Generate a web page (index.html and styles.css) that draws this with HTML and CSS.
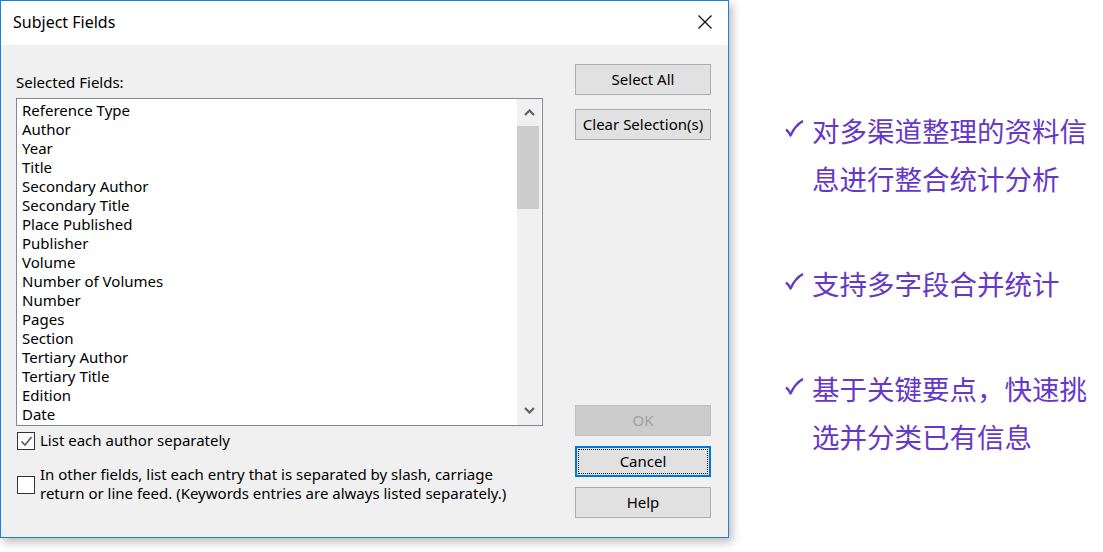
FILE: index.html
```html
<!DOCTYPE html>
<html lang="zh-CN">
<head>
<meta charset="utf-8">
<title>Subject Fields</title>
<link rel="stylesheet" href="styles.css">
</head>
<body>
<div class="page">
  <div class="dialog">
    <div class="titlebar">
      <span class="title">Subject Fields</span>
      <svg class="close" width="16" height="16" viewBox="0 0 16 16"><path d="M1.5 1.5L14.5 14.5M14.5 1.5L1.5 14.5" stroke="#111" stroke-width="1.3" fill="none"/></svg>
    </div>
    <div class="content">
      <div class="left">
        <div class="label">Selected Fields:</div>
        <div class="listbox">
          <div class="items">
            <div>Reference Type</div>
            <div>Author</div>
            <div>Year</div>
            <div>Title</div>
            <div>Secondary Author</div>
            <div>Secondary Title</div>
            <div>Place Published</div>
            <div>Publisher</div>
            <div>Volume</div>
            <div>Number of Volumes</div>
            <div>Number</div>
            <div>Pages</div>
            <div>Section</div>
            <div>Tertiary Author</div>
            <div>Tertiary Title</div>
            <div>Edition</div>
            <div>Date</div>
          </div>
          <div class="scrollbar">
            <div class="sb-btn sb-up"><svg width="11" height="7" viewBox="0 0 11 7"><path d="M1 6L5.5 1.5L10 6" stroke="#606060" stroke-width="2.2" fill="none"/></svg></div>
            <div class="sb-track"><div class="sb-thumb"></div></div>
            <div class="sb-btn sb-down"><svg width="11" height="7" viewBox="0 0 11 7"><path d="M1 1L5.5 5.5L10 1" stroke="#606060" stroke-width="2.2" fill="none"/></svg></div>
          </div>
        </div>
        <div class="check-row row1">
          <span class="box"><svg width="15" height="15" viewBox="0 0 15 15"><path d="M2.5 7.5L6 11L12.5 3" stroke="#5a5a5a" stroke-width="1.6" fill="none"/></svg></span>
          <span class="check-label">List each author separately</span>
        </div>
        <div class="check-row row2">
          <span class="box"></span>
          <span class="check-label">In other fields, list each entry that is separated by slash, carriage<br>return or line feed. (Keywords entries are always listed separately.)</span>
        </div>
      </div>
      <div class="right">
        <button class="btn">Select All</button>
        <button class="btn btn-clear">Clear Selection(s)</button>
        <button class="btn btn-ok" disabled>OK</button>
        <button class="btn btn-cancel"><span class="focus">Cancel</span></button>
        <button class="btn btn-help">Help</button>
      </div>
    </div>
  </div>
  <div class="notes">
    <div class="note"><svg class="tick" width="19" height="17" viewBox="0 0 19 17"><path d="M1 9.5C2.5 10.5 4 12.5 5.5 15.5C8.5 9 12.5 4 18 1" stroke="currentColor" stroke-width="2.4" fill="none" stroke-linejoin="round"/></svg><span class="note-text">对多渠道整理的资料信<br>息进行整合统计分析</span></div>
    <div class="note"><svg class="tick" width="19" height="17" viewBox="0 0 19 17"><path d="M1 9.5C2.5 10.5 4 12.5 5.5 15.5C8.5 9 12.5 4 18 1" stroke="currentColor" stroke-width="2.4" fill="none" stroke-linejoin="round"/></svg><span class="note-text">支持多字段合并统计</span></div>
    <div class="note"><svg class="tick" width="19" height="17" viewBox="0 0 19 17"><path d="M1 9.5C2.5 10.5 4 12.5 5.5 15.5C8.5 9 12.5 4 18 1" stroke="currentColor" stroke-width="2.4" fill="none" stroke-linejoin="round"/></svg><span class="note-text">基于关键要点，快速挑<br>选并分类已有信息</span></div>
  </div>
</div>
</body>
</html>
```

FILE: styles.css
```css
html, body {
  margin: 0;
  padding: 0;
  background: #ffffff;
}
.page {
  display: flex;
  align-items: flex-start;
  width: 1103px;
  height: 552px;
  overflow: hidden;
}
.dialog {
  width: 727px;
  height: 536px;
  border: 1px solid #1c80d6;
  background: #f0f0f0;
  box-shadow: 3px 4px 9px rgba(0, 0, 0, 0.28);
  display: flex;
  flex-direction: column;
  font-family: "Noto Sans", "Open Sans", sans-serif;
  font-size: 15px;
  color: #000;
  flex: none;
}
.titlebar {
  height: 44px;
  background: #ffffff;
  display: flex;
  align-items: center;
  justify-content: space-between;
  padding: 0 15px 0 12px;
  flex: none;
}
.title {
  font-size: 16px;
  position: relative;
  top: -1px;
}
.close {
  position: relative;
  top: -1px;
}
.content {
  flex: 1;
  display: flex;
  padding: 19px 16px 19px 15px;
}
.left {
  width: 527px;
  display: flex;
  flex-direction: column;
}
.label {
  margin-top: 9px;
  line-height: 18px;
  height: 18px;
}
.listbox {
  margin-top: 7px;
  height: 326px;
  border: 1px solid #828790;
  background: #fff;
  display: flex;
}
.items {
  flex: 1;
  padding: 2px 0 0 5px;
  line-height: 19px;
  overflow: hidden;
}
.scrollbar {
  width: 24px;
  margin-right: 1px;
  background: #f0f0f0;
  display: flex;
  flex-direction: column;
}
.sb-btn {
  display: flex;
  align-items: center;
  justify-content: center;
  flex: none;
}
.sb-up { height: 27px; }
.sb-down { height: 30px; }
.sb-track {
  flex: 1;
}
.sb-thumb {
  width: 22px;
  height: 83px;
  background: #cdcdcd;
}
.check-row {
  display: flex;
  align-items: flex-start;
  margin-left: 1px;
}
.row1 { margin-top: 6px; }
.row2 { margin-top: 24px; }
.box {
  width: 16px;
  height: 16px;
  border: 1px solid #333;
  background: #fff;
  flex: none;
  display: flex;
  align-items: center;
  justify-content: center;
}
.row2 .box { margin-top: 1px; }
.check-label {
  margin-left: 5px;
  line-height: 19px;
  position: relative;
  top: -1px;
}
.row2 .check-label { top: -10px; }
.right {
  margin-left: 32px;
  width: 136px;
  display: flex;
  flex-direction: column;
}
.btn {
  width: 136px;
  height: 31px;
  border: 1px solid #adadad;
  background: #e1e1e1;
  font-family: "Noto Sans", "Open Sans", sans-serif;
  font-size: 15px;
  color: #000;
  padding: 0 0 2px 0;
  display: flex;
  align-items: center;
  justify-content: center;
  flex: none;
}
.btn-clear { margin-top: 14px; }
.btn-ok {
  margin-top: auto;
  background: #cccccc;
  border-color: #bfbfbf;
  color: #a0a0a0;
}
.btn-cancel {
  margin-top: 10px;
  border: 2px solid #0078d7;
  padding: 1px;
}
.focus {
  flex: 1;
  align-self: stretch;
  border: 1px dotted #111;
  display: flex;
  align-items: center;
  justify-content: center;
  padding-bottom: 1px;
}
.btn-help { margin-top: 10px; }
.notes {
  margin-left: 56px;
  padding-top: 106px;
  display: flex;
  flex-direction: column;
  gap: 57px;
  font-family: "Noto Sans CJK SC", "Noto Sans", sans-serif;
  color: #6638c8;
}
.note {
  display: flex;
  align-items: flex-start;
}
.tick {
  flex: none;
  margin-top: 14px;
  margin-right: 8px;
}
.note-text {
  font-size: 27.5px;
  line-height: 48px;
  white-space: nowrap;
}
```
